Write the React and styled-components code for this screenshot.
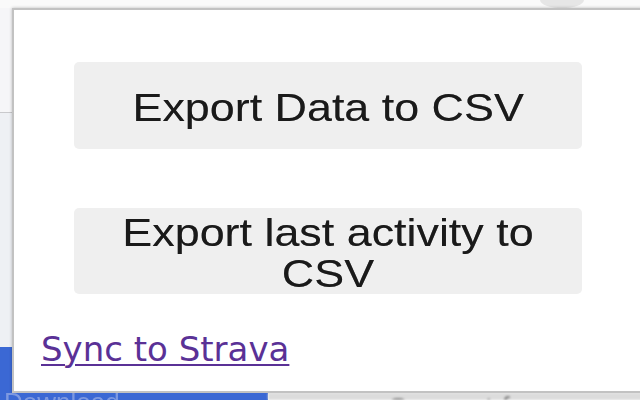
import React from "react";
import styled, { createGlobalStyle } from "styled-components";

const Global = createGlobalStyle`
  html, body { margin: 0; padding: 0; background: #ffffff; }
  #root { width: 640px; height: 400px; }
`;

const Page = styled.div`
  width: 640px;
  height: 400px;
  overflow: hidden;
  display: grid;
  grid-template-columns: 12px 660px;
  grid-template-rows: 8px 385px 7px;
  background: #ffffff;
`;

const TopStrip = styled.div`
  grid-column: 1 / 3;
  grid-row: 1;
  background: #fafafa;
  display: flex;
  justify-content: flex-end;
  padding-right: 88px;
`;

const Blob = styled.div`
  width: 44px;
  height: 16px;
  margin-top: -8px;
  border-radius: 50%;
  background: #e6e6e6;
`;

const LeftStrip = styled.div`
  grid-column: 1;
  grid-row: 2;
  display: grid;
  grid-template-rows: 104px 1px 234px 1fr;
`;

const Shade = styled.div`
  background: ${(p) => p.$bg};
`;

const BottomStrip = styled.div`
  grid-column: 1 / 3;
  grid-row: 3;
  display: grid;
  grid-template-columns: 268px 1fr;
  overflow: hidden;
`;

const BlueTab = styled.div`
  background: #3b68d4;
  color: #7e99e0;
  font: 26px "Liberation Sans", Arial, sans-serif;
  line-height: 18px;
  padding-left: 4px;
  white-space: nowrap;
  overflow: hidden;
  filter: blur(0.6px);
`;

const GreyTab = styled.div`
  background: #dcdcdc;
  color: #8a8a8a;
  font: 30px "Liberation Sans", Arial, sans-serif;
  line-height: 30px;
  padding-left: 120px;
  white-space: nowrap;
  overflow: hidden;
  filter: blur(1px);
`;

const Popup = styled.div`
  grid-column: 2;
  grid-row: 2;
  box-sizing: border-box;
  width: 632px;
  height: 385px;
  background: #ffffff;
  border: 2px solid #c2c2c2;
  box-shadow: 0 0 3px rgba(0, 0, 0, 0.25);
  padding: 52px 0 0 27px;
  display: flex;
  flex-direction: column;
  align-items: flex-start;
`;

const ExportButton = styled.button`
  box-sizing: border-box;
  width: 508px;
  height: ${(p) => p.$h}px;
  margin: 0 0 0 33px;
  padding: 3px 0 0 0;
  border: none;
  border-radius: 5px;
  background: #efefef;
  color: #1a1a1a;
  font-family: "Liberation Sans", Arial, sans-serif;
  font-size: 39px;
  line-height: 41px;
  display: flex;
  align-items: center;
  justify-content: center;
  cursor: pointer;
  & + & {
    margin-top: 59px;
  }
`;

const Label = styled.span`
  display: inline-block;
  max-width: 420px;
  text-align: center;
  transform: scaleX(1.15);
  transform-origin: center;
  text-shadow: 0 0 0.6px rgba(0, 0, 0, 0.5);
`;

const SyncLink = styled.a`
  margin-top: 35px;
  font-family: "DejaVu Sans", Verdana, sans-serif;
  font-size: 34px;
  line-height: 40px;
  color: #5a3196;
  text-decoration: underline;
  text-decoration-thickness: 2px;
  text-underline-offset: 3px;
  cursor: pointer;
`;

export default function App() {
  return (
    <>
      <Global />
      <Page>
        <TopStrip>
          <Blob />
        </TopStrip>
        <LeftStrip>
          <Shade $bg="#f6f6f8" />
          <Shade $bg="#c9c9cc" />
          <Shade $bg="#eef0f4" />
          <Shade $bg="#3b68d4" />
        </LeftStrip>
        <Popup>
          <ExportButton $h={87}>
            <Label>Export Data to CSV</Label>
          </ExportButton>
          <ExportButton $h={86}>
            <Label>Export last activity to CSV</Label>
          </ExportButton>
          <SyncLink>Sync to Strava</SyncLink>
        </Popup>
        <BottomStrip>
          <BlueTab>Download</BlueTab>
          <GreyTab>Support for</GreyTab>
        </BottomStrip>
      </Page>
    </>
  );
}
